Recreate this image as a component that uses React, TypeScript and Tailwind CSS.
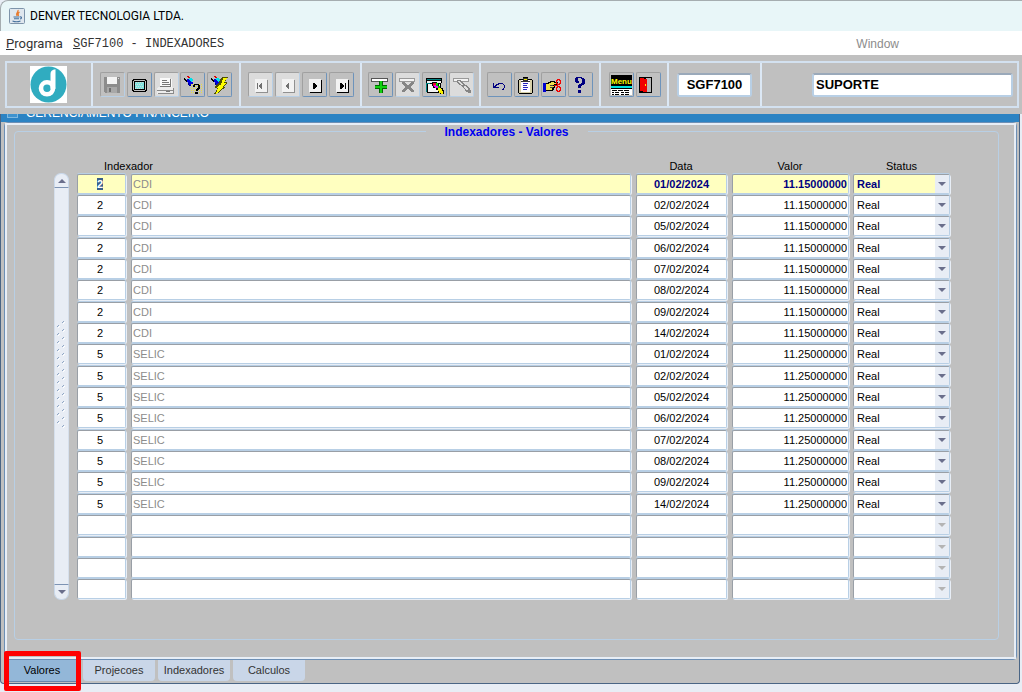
import { useEffect, useRef, type ReactNode } from "react";

type Row = { code: string; name: string; date: string; value: string };

const DATES = [
  "01/02/2024",
  "02/02/2024",
  "05/02/2024",
  "06/02/2024",
  "07/02/2024",
  "08/02/2024",
  "09/02/2024",
  "14/02/2024",
];

const ROWS: Row[] = [
  ...DATES.map((date) => ({ code: "2", name: "CDI", date, value: "11.15000000" })),
  ...DATES.map((date) => ({ code: "5", name: "SELIC", date, value: "11.25000000" })),
  ...Array.from({ length: 4 }, () => ({ code: "", name: "", date: "", value: "" })),
];

function Icon({ children }: { children: ReactNode }) {
  return (
    <svg viewBox="0 0 22 22" className="block size-[22px] overflow-visible" shapeRendering="crispEdges" aria-hidden="true">
      {children}
    </svg>
  );
}

function ToolButton({ label, disabled, light, children }: { label: string; disabled?: boolean; light?: boolean; children: ReactNode }) {
  return (
    <button
      type="button"
      aria-label={label}
      title={label}
      disabled={disabled}
      className={`size-[25px] shrink-0 rounded-[2px] border border-t-[#a0a0a0] border-l-[#a0a0a0] ${
        disabled ? "border-r-[#b8cfe5] border-b-[#b8cfe5]" : "border-r-[#6d93bb] border-b-[#6d93bb]"
      } ${light ? "bg-[#dcdcdc]" : "bg-[#c0c0c0]"}`}
    >
      <Icon>{children}</Icon>
    </button>
  );
}

function Torch() {
  return (
    <>
      <path d="M3 4h1v1h1v1h1v1h1v1h-2v-1h-1v-1h-1z" fill="#000" />
      <path d="M6 2h2v1h1v1h-2v-1h-1z" fill="#e00000" />
      <path d="M6 5h3v1h2v2h1v2h-2v1h-2v-1h-1v-2h-1z" fill="#0000e0" />
      <path d="M8 4h3v1h1v2h-1v1h-1v-1h-1v-1h-1z" fill="#00e0e8" />
      <path d="M7 9h1v2h2v1h-2v-1h-1z" fill="#000080" />
    </>
  );
}

function NavIcon({ dir, bar, disabled }: { dir: "left" | "right"; bar?: boolean; disabled?: boolean }) {
  const ink = disabled ? "#707070" : "#000";
  return (
    <>
      <path d="M7 6h12v13h-12z" fill={disabled ? "#909090" : "#000"} />
      <path d="M6 5h12v13h-12z" fill="#f2f2f2" />
      {dir === "left" ? (
        <path d="M13 9v6h-1v-1h-1v-1h-1v-2h1v-1h1v-1z" fill={ink} />
      ) : (
        <path d="M10 9v6h2v-1h1v-1h1v-2h-1v-1h-1v-1z" fill={ink} />
      )}
      {bar && <path d={dir === "left" ? "M8 9h1v6h-1z" : "M15 9h1v6h-1z"} fill={ink} />}
    </>
  );
}

function DenverLogo() {
  return (
    <svg viewBox="0 0 37 37" className="size-[37px] bg-white" role="img" aria-label="Denver">
      <circle cx="18.5" cy="18.5" r="18" fill="#30acc0" />
      <circle cx="17" cy="22.3" r="6" fill="none" stroke="#fff" strokeWidth="4.6" />
      <path d="M20.5 8c0-3 1.500-4.500 5-4.800v19.500h-5z" fill="#fff" />
      <path d="M8 26.500q1 4.500 6 5.500l-2 1z" fill="#30acc0" />
    </svg>
  );
}

function JavaIcon() {
  return (
    <svg viewBox="0 0 16 16" className="size-4" aria-hidden="true">
      <rect x="0.5" y="0.5" width="15" height="15" rx="1" fill="#dfe7ee" stroke="#7d94aa" />
      <path d="M9 2c1 2-3 3-1 6M10.500 4c-2 1-2 2-1 4" fill="none" stroke="#e8792b" strokeWidth="1.300" />
      <path d="M4.500 9h6M5 10.800h5M3.500 13c2 .8 6 .8 8 0M11 9c2-.5 2 1.500 0 2" fill="none" stroke="#47729d" strokeWidth="1.100" />
    </svg>
  );
}

function Section({ width, children }: { width: string; children: ReactNode }) {
  return <div className={`flex items-center border-r-2 border-[#dce8f5] ${width}`}>{children}</div>;
}

function Toolbar() {
  return (
    <div className="bg-[#c0c0c0] pt-[6px] pr-[3px] pb-[6px] pl-[5px]">
      <div className="flex h-[47px] border-2 border-[#d3e1f0]">
        <Section width="w-[86px] pl-[23px]">
          <DenverLogo />
        </Section>
        <Section width="w-[148px] pl-[7px]">
          <div className="flex w-[132px] justify-between">
            <ToolButton label="Salvar" disabled>
              <path d="M3 3h16v16h-15v-1h-1z" fill="#8c8c8c" />
              <path d="M6 3h10v7h-10z" fill="#f4f4f4" />
              <path d="M6 13h10v6h-10z" fill="#a8a8a8" />
              <path d="M8 14h2v4h-2z" fill="#6f6f6f" />
              <path d="M17 4h1v1h-1z" fill="#ddd" />
            </ToolButton>
            <ToolButton label="Tela">
              <path d="M5 5h13v1h1v11h-1v1h-13v-1h-1v-11h1z" fill="#000" />
              <path d="M6 6h11v1h1v9h-1v1h-11v-1h-1v-9h1z" fill="#c0c0c0" />
              <path d="M6 7h11v9h-11z" fill="#000" />
              <path d="M7 8h9v7h-9z" fill="#7fe4e0" />
              <path d="M8 8.500h8M7 10.500h8M8 12.500h8M7 14.500h8" stroke="#d5dcdc" strokeDasharray="1 1" />
            </ToolButton>
            <ToolButton label="Imprimir" disabled light>
              <path d="M5 4h10v1h2v9h-12z" fill="#fafafa" />
              <path d="M7 6h5v1h-5zM7 8h7v1h-7zM7 10h8v1h-8zM15 5h1v7h-1zM5 12h11v1h-11z" fill="#777" />
              <path d="M3 13h15v1h1v6h-17v-6h1z" fill="#ededed" />
              <path d="M2 16h17v1h-17zM3 19h16v1h-16zM18 14h1v5h-1z" fill="#8a8a8a" />
              <path d="M11 17h4v1h-4z" fill="#777" />
            </ToolButton>
            <ToolButton label="Entrar consulta">
              <path d="M10.500 10v10M12.500 10v10M14.500 10v10M16.500 10v10M18.500 10v10M20.500 10v10" stroke="#e8e040" strokeDasharray="1 1" />
              <Torch />
              <path d="M13 10h5v1h1v4h-1v1h-1v1h-2v-2h1v-1h1v-3h-3v2h-2v-2h1zM14 18h3v2h-3z" fill="#000" />
            </ToolButton>
            <ToolButton label="Executar consulta">
              <Torch />
              <path d="M14 3h6v1h-1v1h-1v2h-1v1h2v2h-1v1h-1v1h-1v1h1v1h-1v1h-2v1h-1v1h-1v1h-1v1h-2v1h-3v-1h1v-1h1v-2h1v-2h-2v-2h1v-1h1v-1h1v-1h1v-2h1v-2h1z" fill="#505000" />
              <path d="M15 4h4l-3 5h2l-4 4h2l-8 7 2-6h-2l3-3h2z" fill="#ffff00" />
            </ToolButton>
          </div>
        </Section>
        <Section width="w-[121px] pl-[7px]">
          <div className="flex w-[106px] justify-between">
            <ToolButton label="Primeiro" disabled light><NavIcon dir="left" bar disabled /></ToolButton>
            <ToolButton label="Anterior" disabled light><NavIcon dir="left" disabled /></ToolButton>
            <ToolButton label="Próximo"><NavIcon dir="right" /></ToolButton>
            <ToolButton label="Último"><NavIcon dir="right" bar /></ToolButton>
          </div>
        </Section>
        <Section width="w-[119px] pl-[6px]">
          <div className="flex w-[106px] justify-between">
            <ToolButton label="Inserir">
              <path d="M2 4h17v4h-17z" fill="#555" />
              <path d="M3 5h15v2h-15z" fill="#fff" />
              <path d="M10 7h4v4h4v4h-4v4h-4v-4h-4v-4h4z" fill="#006800" />
              <path d="M11 7h2v5h5v2h-5v5h-2v-5h-5v-2h5z" fill="#10d010" />
            </ToolButton>
            <ToolButton label="Remover" disabled light>
              <path d="M3 4h16v4h-16z" fill="#999" />
              <path d="M4 5h14v2h-14z" fill="#f4f4f4" />
              <path d="M6 8h3v1h1v1h1v1h2v-1h1v-1h1v-1h3v2h-1v1h-1v1h-1v2h1v1h1v1h1v2h-3v-1h-1v-1h-1v-1h-2v1h-1v1h-1v1h-3v-2h1v-1h1v-1h1v-2h-1v-1h-1v-1h-1z" fill="#858585" />
            </ToolButton>
            <ToolButton label="Limpar">
              <path d="M3 4h16v5h-16zM4 9h14v10h-14z" fill="#000" />
              <path d="M4 5h14v1h-14z" fill="#008080" />
              <path d="M4 7h14v2h-14zM5 10h12v8h-12z" fill="#f4f4f4" />
              <path d="M3 9h4v1h-3v8h-1z" fill="#008080" />
              <path d="M9 8h5v1h2v3h2v2h2v2h1v4h-4v-1h-2v-3h-2v-2h-3v-2h-1z" fill="#000" />
              <path d="M10 9h3v3h-3z" fill="#f00030" />
              <path d="M11 11h4v3h-3v-1h-1z" fill="#f000f0" />
              <path d="M13 9h2v3h2v2h-2v-2h-2z" fill="#00d000" />
              <path d="M15 14h3v1h1v2h1v3h-2v-1h-2v-2h-1z" fill="#f8f000" />
            </ToolButton>
            <ToolButton label="Editar" disabled light>
              <path d="M3 4h16v4h-16z" fill="#999" />
              <path d="M4 5h14v2h-14z" fill="#f4f4f4" />
              <path d="M7 6h4v1h1v1h1v1h1v1h1v1h2v1h1v1h1v1h1v2h1v3h-3v-1h-2v-1h-1v-2h-1v-1h-1v-1h-1v-1h-1v-1h-2v-1h-1v-1h-1z" fill="#858585" />
              <path d="M8 7h2v1h1v1h1v1h1v1h-2v-1h-1v-1h-1v-1h-1zM14 12h2v1h1v1h1v2h-2v-1h-1v-1h-1z" fill="#e0e0e0" />
            </ToolButton>
          </div>
        </Section>
        <Section width="w-[120px] pl-[6px]">
          <div className="flex w-[106px] justify-between">
            <ToolButton label="Desfazer">
              <path d="M5 9h1v3h1v-1h1v-1h2v-1h5v1h1v1h1v3h-1v2h-2v-1h1v-1h1v-3h-1v-1h-4v1h-2v1h-1v1h3v1h-6z" fill="#000080" />
            </ToolButton>
            <ToolButton label="Área de transferência">
              <path d="M4 5h4v-2h5v2h4v1h1v13h-1v1h-13v-1h-1v-13h1z" fill="#000" />
              <path d="M4 6h2v12h9v-12h2v13h-13z" fill="#d8d0a8" />
              <path d="M6 6h9v12h-9z" fill="#fff" />
              <path d="M8 4h5v3h2v1h-9v-1h2z" fill="#333" />
              <path d="M9 5h3v1h-3z" fill="#f8f000" />
              <path d="M8 9h5v1h-5zM8 11h4v1h-4zM8 13h5v1h-5zM8 15h4v1h-4z" fill="#2828c0" />
            </ToolButton>
            <ToolButton label="Recortar">
              <path d="M1 9h3v9h-3z" fill="#0000d0" />
              <path d="M4 9h2v-1h2v-1h5v1h3v3h-2v1h-1v2h-1v2h-1v1h-7z" fill="#000" />
              <path d="M4 10h3v-1h2v-1h3v1h3v1h-3v1h-1v1h1v1h-1v1h-1v2h-6z" fill="#f0e050" />
              <path d="M8 11h3v1h-3zM8 13h3v1h-3z" fill="#444" />
              <path d="M15.500 5.500h2v1h1v3h-1v1h-2v-1h-1v-3h1zM15.500 12.500h2v1h1v3h-1v1h-2v-1h-1v-3h1z" fill="none" stroke="#f00000" />
              <path d="M12 11h4v1h-4z" fill="#f00000" />
            </ToolButton>
            <ToolButton label="Ajuda">
              <path d="M7 3h6v1h2v1h1v5h-1v1h-2v1h-1v2h-3v-3h1v-1h2v-1h1v-4h-1v-1h-3v3h1v2h-3v-1h-1v-4h1zM9 16h3v3h-3z" fill="#000080" />
            </ToolButton>
          </div>
        </Section>
        <Section width="w-[68px] pl-[8px]">
          <div className="flex w-[52px] justify-between">
            <ToolButton label="Menu">
              <path d="M1 1h21v11h-21z" fill="#000" />
              <text x="1" y="10" fontFamily="Liberation Sans" fontSize="8" fontWeight="bold" fill="#ffff00">Menu</text>
              <path d="M1 12h21v2h-21z" fill="#00e0e0" />
              <path d="M1 15h21v6h-21z" fill="#fff" />
              <path d="M1 14h21v1h-21zM2 16h5v1h-5zM8 16h5v1h-5zM14 16h5v1h-5zM2 18h2v1h-2zM5 18h4v1h-4zM11 18h3v1h-3zM15 18h4v1h-4zM2 20h2v1h-2zM5 20h4v1h-4zM11 20h3v1h-3zM15 20h4v1h-4z" fill="#000" />
            </ToolButton>
            <ToolButton label="Sair">
              <path d="M2 3h13v16h-13z" fill="#000" />
              <path d="M9 4h5v14h-5z" fill="#b8b8b8" />
              <path d="M3 4h4v1h3v13h-4v-1h-3z" fill="#f00000" />
              <path d="M8 10h1v2h-1z" fill="#fff000" />
            </ToolButton>
          </div>
        </Section>
        <Section width="w-[93px] justify-center">
          <input
            aria-label="Programa atual"
            defaultValue="SGF7100"
            className="h-6 w-[75px] rounded-[3px] border-2 border-[#b8cfe5] border-t-[#9aa9ba] bg-white text-center text-[13px] leading-5 font-bold outline-none"
          />
        </Section>
        <div className="flex flex-1 items-center pr-1 pl-[50px]">
          <input
            aria-label="Usuário"
            defaultValue="SUPORTE"
            className="h-6 w-full rounded-[3px] border-2 border-[#b8cfe5] border-t-[#9aa9ba] bg-white px-[2px] text-[13px] leading-5 font-bold outline-none"
          />
        </div>
      </div>
    </div>
  );
}

const FIELD =
  "block h-5 w-full rounded-[2px] border border-t-[#999fa6] border-l-[#999fa6] border-r-[#b8cfe5] border-b-[#b8cfe5] text-[11px] leading-4 outline-none shadow-[0_-1px_0_#b8cfe5,1px_1px_0_#e8eef6]";

function GridRow({ row, current, index }: { row: Row; current: boolean; index: number }) {
  const first = useRef<HTMLInputElement>(null);
  useEffect(() => {
    if (current) {
      first.current?.focus();
      first.current?.select();
    }
  }, [current]);
  const tone = current ? "bg-[#ffffc0] font-bold text-[#000080]" : "bg-white text-black";
  const n = index + 1;
  return (
    <tr>
      <td className="p-0 pr-[5px]">
        <input
          ref={first}
          aria-label={`Indexador ${n}`}
          defaultValue={row.code}
          className={`${FIELD} ${tone} pr-[3px] text-center selection:bg-[#385d8a]/99 selection:text-[#ffffff]`}
        />
      </td>
      <td className="p-0 pr-[5px]">
        <input
          aria-label={`Nome ${n}`}
          readOnly
          value={row.name}
          className={`${FIELD} px-px ${current ? "bg-[#ffffc0]" : "bg-white"} text-[#8c8c8c]`}
        />
      </td>
      <td className="p-0 pr-[5px]">
        <input aria-label={`Data ${n}`} defaultValue={row.date} className={`${FIELD} ${tone} text-center`} />
      </td>
      <td className="p-0 pr-[4px]">
        <input aria-label={`Valor ${n}`} defaultValue={row.value} className={`${FIELD} ${tone} pr-px text-right`} />
      </td>
      <td className="p-0">
        <div className="relative">
          <select
            aria-label={`Status ${n}`}
            disabled={!row.code}
            className={`${FIELD} ${tone} appearance-none border-r-[#999fa6] border-b-[#999fa6] pl-[3px] opacity-100`}
          >
            <option>{row.code ? "Real" : ""}</option>
          </select>
          <span className="pointer-events-none absolute inset-y-px right-px flex w-[14px] items-center justify-center bg-[#e8edf5]">
            <svg viewBox="0 0 8 4" className="h-1 w-2" aria-hidden="true">
              <path d="M0 0h8l-4 4z" fill={row.code ? "#6a6f8c" : "#b4b4b4"} />
            </svg>
          </span>
        </div>
      </td>
    </tr>
  );
}

function ScrollBar() {
  return (
    <div className="flex w-[15px] flex-col">
      <button type="button" aria-label="Rolar para cima" className="flex h-[15px] items-center justify-center rounded-t-[7px] border border-b-[#7d93b3] border-[#c9d8ea] bg-[#e8edf5]">
        <svg viewBox="0 0 8 4" className="h-1 w-2" aria-hidden="true">
          <path d="M0 4h8l-4-4z" fill="#6a6f8c" />
        </svg>
      </button>
      <div className="flex flex-1 justify-center border-x border-[#d5dfec] bg-[#e8edf5] pt-[133px]">
        <svg width="9" height="108" viewBox="0 0 9 108" aria-hidden="true">
          <defs>
            <pattern id="grip" width="9" height="8" patternUnits="userSpaceOnUse">
              <path d="M5 2l2-2M0 6l2-2" stroke="#8fa6c4" />
              <path d="M6 3l2-2M1 7l2-2" stroke="#fff" />
            </pattern>
          </defs>
          <rect width="9" height="108" fill="url(#grip)" />
        </svg>
      </div>
      <button type="button" aria-label="Rolar para baixo" className="flex h-[16px] items-center justify-center rounded-b-[7px] border border-t-[#7d93b3] border-[#c9d8ea] bg-[#e8edf5]">
        <svg viewBox="0 0 8 4" className="h-1 w-2" aria-hidden="true">
          <path d="M0 0h8l-4 4z" fill="#6a6f8c" />
        </svg>
      </button>
    </div>
  );
}

function Tabs() {
  const tab = "block h-[21px] rounded-b-[4px] bg-[#c9d6e8] text-center text-[11px] text-[#333]";
  return (
    <div role="tablist" className="flex items-start gap-[3px] pl-[7px]">
      <div className="relative mr-[4px]">
        <button type="button" role="tab" aria-selected="true" className="block h-[22px] w-[68px] border-b border-[#6787ab] bg-[#93b7d8] text-[11px] text-black">
          Valores
        </button>
        <div className="pointer-events-none absolute -top-[9px] -left-[4px] h-10 w-[77px] rounded-[2px] border-5 border-[#ff0000]" />
      </div>
      <button type="button" role="tab" className={`${tab} w-[72px]`}>Projecoes</button>
      <button type="button" role="tab" className={`${tab} w-[72px]`}>Indexadores</button>
      <button type="button" role="tab" className={`${tab} w-[72px]`}>Calculos</button>
    </div>
  );
}

export default function App() {
  return (
    <div className="min-h-screen bg-[#e8edf5] font-['Liberation_Sans',Arial,sans-serif] text-black">
      <header className="flex h-[31px] items-center gap-[5px] rounded-tl-lg border-t border-l border-[#a5adb0] bg-[#e8f6f8] pl-2 font-['Roboto',sans-serif] text-[12px]">
        <JavaIcon />
        <h1>DENVER TECNOLOGIA LTDA.</h1>
      </header>
      <nav className="flex h-6 items-center bg-white pt-[2px] pl-[6px] text-[12px] text-[#333]">
        <a href="#programa" className="w-[67px] font-['Roboto',sans-serif] text-[13px]"><u>P</u>rograma</a>
        <a href="#sgf7100" className="font-['Liberation_Mono',monospace]"><u>S</u>GF7100 - INDEXADORES</a>
        <a href="#window" className="mr-[123px] ml-auto text-[#8c8c8c]">Window</a>
      </nav>
      <Toolbar />
      <main className="mr-[2px] rounded-b-[4px] border-r border-b border-l border-[#4a6585] bg-[#c0c0c0]">
        <div className="flex h-2 items-end gap-2 overflow-hidden bg-[#2c83c3] pl-[6px] text-[12px] leading-3 text-white">
          <span className="mb-1 h-3 w-[11px] border border-[#7fb8e0] bg-[#3f93cf]" />
          <h2 className="mb-[3px]">GERENCIAMENTO FINANCEIRO</h2>
        </div>
        <div className="mr-[2px] ml-[3px] rounded-[4px] rounded-bl-none border border-[#6d8fb5]">
          <div className="border-2 border-[#e8eef6] pr-[15px] pb-[17px] pl-[7px]">
            <fieldset className="min-w-0 rounded-[4px] border border-[#b8cfe5] pb-[39px]">
              <legend className="mx-auto w-[162px] pt-[2px] text-center text-[12px] leading-[11px] font-bold text-[#0000f0]">
                Indexadores - Valores
              </legend>
              <div className="mt-[21px] flex pr-[48px] pl-[39px]">
                <div className="mt-[14px] mr-2 flex">
                  <ScrollBar />
                </div>
                <table className="h-[441px] flex-1 table-fixed border-collapse text-[11px]">
                  <colgroup>
                    <col className="w-[54px]" />
                    <col />
                    <col className="w-[96px]" />
                    <col className="w-[121px]" />
                    <col className="w-[97px]" />
                  </colgroup>
                  <thead>
                    <tr className="h-[14px] leading-[14px]">
                      <th colSpan={2} className="p-0 pl-[27px] text-left font-normal">Indexador</th>
                      <th className="p-0 pr-[6px] font-normal">Data</th>
                      <th className="p-0 pr-[5px] font-normal">Valor</th>
                      <th className="p-0 font-normal">Status</th>
                    </tr>
                  </thead>
                  <tbody>
                    {ROWS.map((row, i) => (
                      <GridRow key={i} row={row} index={i} current={i === 0} />
                    ))}
                  </tbody>
                </table>
              </div>
            </fieldset>
          </div>
        </div>
        <div className="pb-px">
          <Tabs />
        </div>
      </main>
    </div>
  );
}
